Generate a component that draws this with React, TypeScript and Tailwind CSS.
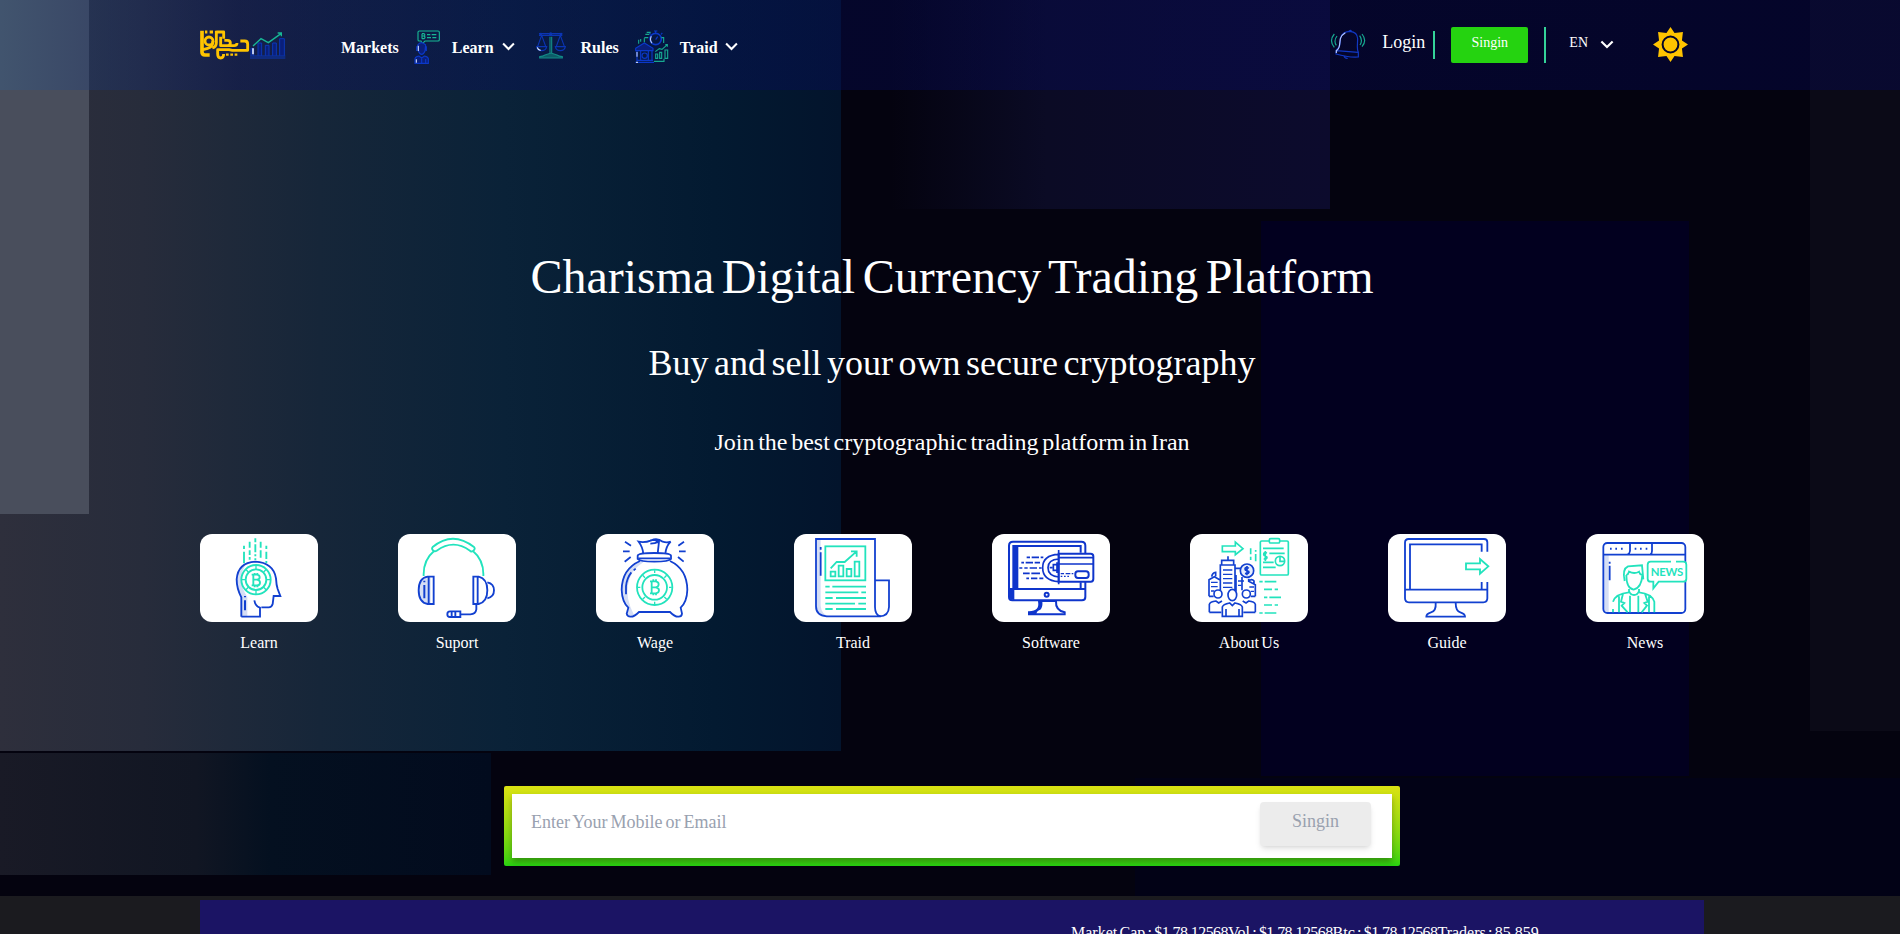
import type { ReactNode } from "react";

const BLUE = "#1240d0";
const MINT = "#22e3bd";
const PALE = "#d5def5";

function Backdrop() {
  return (
    <svg className="absolute inset-0 h-full w-full" viewBox="0 0 1900 896" preserveAspectRatio="none" aria-hidden="true">
      <defs>
        <linearGradient id="teal">
          <stop offset="0" stopColor="#2e2f3c" />
          <stop offset="0.17" stopColor="#272c3b" />
          <stop offset="0.38" stopColor="#162639" />
          <stop offset="0.6" stopColor="#0a2238" />
          <stop offset="0.85" stopColor="#031a31" />
          <stop offset="1" stopColor="#03142c" />
        </linearGradient>
        <linearGradient id="violet">
          <stop offset="0" stopColor="#04030f" />
          <stop offset="0.1" stopColor="#04030f" />
          <stop offset="0.42" stopColor="#0b0b25" />
          <stop offset="1" stopColor="#0c0b2d" />
        </linearGradient>
        <linearGradient id="low">
          <stop offset="0" stopColor="#191a26" />
          <stop offset="0.4" stopColor="#111623" />
          <stop offset="0.55" stopColor="#041020" />
          <stop offset="1" stopColor="#020b1e" />
        </linearGradient>
      </defs>
      <rect width="1900" height="896" fill="#04030f" />
      <rect width="841" height="751" fill="url(#teal)" />
      <rect width="89" height="514" fill="#494e5c" />
      <rect x="841" width="489" height="209" fill="url(#violet)" />
      <rect x="1261" y="221" width="428" height="555" fill="#02001f" />
      <rect x="1810" width="90" height="731" fill="#0b0a17" />
      <rect y="753" width="491" height="122" fill="url(#low)" />
      <rect x="1135" y="778" width="765" height="118" fill="#020216" />
    </svg>
  );
}

function Logo() {
  return (
    <svg className="h-[32px] w-[88px]" viewBox="28 26 264 96" fill="none" aria-hidden="true">
      <g stroke="#ffc400" strokeWidth="8.5" strokeLinejoin="round">
        <path d="M37 31v64q0 9 9 9h14" strokeWidth="11" />
        <circle cx="58" cy="62" r="12" />
        <path d="M46 35h7M60 35h10M70 62q0 18-16 22l-14 4" />
        <path d="M80 31v36q0 12-12 16M80 35h22v20" />
        <path d="M93 49v27h20q9 0 9-8t-9-8h-9M113 76h20q9 0 9-8" />
        <path d="M152 62h13q9 0 9 9v19h-46l-10-2H84v13q0 12 9 12t9-12" />
      </g>
      <path d="M109 103h8M122 103h8M135 103h8" stroke="#ffc400" strokeWidth="7" />
      <g stroke="#0b38b8" strokeWidth="3">
        <path d="M181 113h106M181 107h106M184 106V84h8v22M205 106V68h11v38M227 106V75h11v31M249 106V68h11v38M270 106V55h14v51" fill="#0a1f7a" />
      </g>
      <path d="M190 84v18" stroke="#dbe6ff" strokeWidth="5" />
      <path d="M190 77l24-22 22 12 38-27M264 38h11v10" stroke="#17b795" strokeWidth="4" />
    </svg>
  );
}

function AdvisorIcon() {
  return (
    <svg className="h-[34px] w-[26px]" viewBox="43 31 78 102" fill="none" strokeWidth="3.4" aria-hidden="true">
      <path d="M59 34h56q4 0 4 4v22q0 4-4 4H76l-8 8-4-8h-5q-4 0-4-4V38q0-4 4-4z" stroke="#17b795" />
      <path d="M67 42v15M67 42h6q5 4 0 7q6 4 0 8h-6M67 49h6M82 45h10M96 45h14M82 54h12M98 54h12" stroke="#17b795" />
      <path d="M54 76q10-14 24 0l-2 18q-4 10-10 10t-10-10zM51 80v14M80 80v14M46 131v-14q0-5 12-8l8 6 8-6q12 3 12 8v14zM66 115v14M78 118v12" stroke="#0b38c8" fill="#0a1f7a" />
      <path d="M56 78v16M50 119v10" stroke="#c9d8ff" />
    </svg>
  );
}

function ScalesIcon() {
  return (
    <svg className="h-[28px] w-[30px]" viewBox="407 33 90 84" fill="none" strokeWidth="3.4" aria-hidden="true">
      <path d="M416 41h70M416 46h70M424 46l-12 33M424 46l12 33M480 46l-12 33M480 46l12 33M409 80h30q-2 12-15 12t-15-12zM465 80h30q-2 12-15 12t-15-12z" stroke="#0b35b4" />
      <circle cx="421" cy="42" r="4" fill="#0b35b4" />
      <circle cx="451" cy="42" r="5" fill="#0b35b4" />
      <circle cx="482" cy="42" r="4" fill="#0b35b4" />
      <path d="M411 82q2 8 10 9" stroke="#dbe6ff" />
      <path d="M449 50v49M454 50v49" stroke="#128a86" />
      <path d="M418 114h68v-4q-10-1-16-5l-18-6-18 6q-6 4-16 5z" stroke="#128a86" fill="#0d5c68" />
    </svg>
  );
}

function TradeIcon() {
  return (
    <svg className="h-[34px] w-[36px]" viewBox="702 31 108 102" fill="none" strokeWidth="3.4" aria-hidden="true">
      <g stroke="#0b38c8">
        <path d="M707 86l26-16 26 16v7h-52zM711 94v28M722 94v28M745 94v28M756 94v28M706 128h56M709 122h50" fill="#0a1f7a" />
        <circle cx="734" cy="108" r="8" />
        <circle cx="767" cy="58" r="17" strokeWidth="5" />
        <path d="M767 34v7M762 34h10M752 44l-4-4M783 44l4-4M767 60l6-9" />
      </g>
      <path d="M708 128h6M711 97v14M754 50q-6 12 2 20" stroke="#b8caff" />
      <g stroke="#17a890">
        <path d="M740 38h12M736 44h12M733 56v12M733 54h12M716 60v12M722 58v8M784 54h7v16M762 125h30v-8" />
        <path d="M767 116v-13h6v13zM779 116V98h6v18zM795 116V91h8v25zM766 96l12-9 8 2 16-14M796 75h6v6" />
      </g>
    </svg>
  );
}

function BellIcon() {
  return (
    <svg className="h-[31px] w-[36px]" viewBox="90 88 108 93" fill="none" strokeWidth="3.6" aria-hidden="true">
      <path d="M109 151q10-7 11-20l2-18q6-17 28-18 22 2 23 22l-1 24q0 10 3 17v14q-30 2-67-9zM109 153l66 5M131 168q3 9 12 8M146 96q5-8 10 1" stroke="#1138c4" />
      <path d="M109 160v-7q9-5 10-20l2-16q4-12 15-18" stroke="#b5c6ff" />
      <path d="M103 103q-17 20 0 40M111 109q-11 14-2 28M186 103q16 20 0 38M179 108q10 15 1 28" stroke="#17a890" />
    </svg>
  );
}

function SunIcon() {
  return (
    <svg className="h-[35px] w-[35px]" viewBox="-52 -52 104 104" fill="#ffc400" aria-hidden="true">
      <path d="M0-52L12-34 37-37 34-12 52 0 34 12 37 37 12 34 0 52-12 34-37 37-34 12-52 0-34-12-37-37-12-34z" />
      <circle r="23.5" fill="none" stroke="#04052a" strokeWidth="6" />
    </svg>
  );
}

function Chevron({ className }: { className: string }) {
  return (
    <svg className={className} viewBox="0 0 12 8" fill="none" stroke="#fff" strokeWidth="1.9" aria-hidden="true">
      <path d="M1 1.3l5 5 5-5" />
    </svg>
  );
}

const learn = (
  <svg viewBox="30 27 354 264" fill="none" strokeWidth="5.6">
    <path d="M152 275v-58q-12-28-12-54 0-40 34-52-22 24-20 56 2 26 18 48v60z" fill={PALE} />
    <path d="M154 275v-58q-14-26-14-54 4-50 56-53 54 3 62 50 1 20 5 32l8 21h-20l-3 24q-3 10-12 10h-22M154 275h56v-27q-14-4-17-22" stroke={BLUE} />
    <path d="M165 213v4M165 226v30" stroke={BLUE} strokeWidth="6" />
    <g stroke={MINT}>
      <circle cx="198" cy="164" r="44" />
      <circle cx="198" cy="164" r="31" />
      <path d="M198 120v12M198 196v12M154 164h12M230 164h12M167 133l8 8M229 133l-8 8M167 195l8-8M229 195l-8-8" strokeWidth="4" />
      <path d="M185 149h16q8 1 8 8t-8 7h-11M201 164q9 1 9 9t-9 8h-16M190 149v32M194 144v5M202 144v5M194 181v6M202 181v6" />
      <path d="M162 62v10M162 80v35M179 50v18M179 76v14M179 96v8M196 40v12M196 58v24M196 88v6M196 100v5M212 50v18M212 76v22M229 62v10M229 80v22M229 108v6" />
    </g>
  </svg>
);

const support = (
  <svg viewBox="624 27 354 264" fill="none" strokeWidth="5.6">
    <path d="M716 157q-30 6-30 40t30 39h6v-79z" fill={PALE} />
    <g stroke={BLUE}>
      <path d="M713 155h18v82h-18q-27-4-27-41t27-41zM716 155v82M850 155h16q26 6 26 41t-26 41h-16zM863 155v82M892 172q20 4 20 24t-20 24M859 238v15q-2 14-18 15h-28" />
      <path d="M811 259v17h-31q-8 0-8-8.500t8-8.500z" />
      <path d="M785 259v17M796 259v17" />
      <path d="M703 167v5M703 180v40" strokeWidth="6" />
    </g>
    <path d="M701 153q-2-48 32-76M880 153q2-48-32-76M728 66q60-50 124 0 5 6-2 11t-10 0q-50-36-100 0-6 4-11-1t-1-10z" stroke={MINT} />
  </svg>
);

const wage = (
  <svg viewBox="33 27 354 264" fill="none" strokeWidth="5.4">
    <path d="M165 106q-60 32-54 88 2 40 18 54l-2 20q6 8 20 2-26-50-18-90 8-46 46-68z" fill={PALE} />
    <g stroke={BLUE}>
      <path d="M165 108q-54 24-55 86 1 36 20 54l-5 18q2 10 13 9 10 0 24-14h93q14 14 24 14 11 1 12-9l-4-18q19-18 20-54-1-62-52-86" />
      <path d="M158 92q2-8 50-8t50 8v10q-6 8-50 8t-50-8zM161 100h94M175 86q-2-20-14-36 18 4 38-4 18-8 34 4 12 4 24 0-14 14-16 36M196 56q14 0 26-6l-4 36M196 46q12-4 24 4" />
      <path d="M114 79h20M120 50l18 12M137 96l-18 14M282 79h20M297 50l-17 12M279 96l17 14M123 208v-24q2-24 16-42M146 136l6-5" />
    </g>
    <g stroke={MINT}>
      <circle cx="209" cy="187" r="53" />
      <circle cx="209" cy="187" r="37" />
      <path d="M209 136v8M209 230v8M158 187h8M252 187h8M173 151l7 7M245 151l-7 7M173 223l7-7M245 223l-7-7" strokeWidth="4" />
      <path d="M195 169h17q9 1 9 9t-9 9h-12M212 187q10 1 10 9t-10 9h-17M200 169v36M205 163v6M213 163v6M205 205v6M213 205v6" />
    </g>
  </svg>
);

const trade = (
  <svg viewBox="627 27 354 264" fill="none" strokeWidth="5.4">
    <path d="M693 42h14v200q2 26 26 32h-20q-20-6-20-30z" fill={PALE} />
    <path d="M870 42H693v202q0 28 32 30h158q28 0 29-28v-80h-42zM870 166v80q0 26 18 28" stroke={BLUE} />
    <path d="M707 66v8M707 82v70" stroke={BLUE} />
    <g stroke={MINT}>
      <rect x="721" y="64" width="120" height="102" />
      <path d="M737 154v-14h14v14zM761 154v-32h14v32zM785 154v-22h14v22zM809 154v-44h14v44zM737 130l18-19h24l35-31M798 79h17v16" />
      <path d="M721 185h13M742 185h101M721 202h99M829 202h14M721 219h22M753 219h90M721 236h89M820 236h23M721 252h22M753 252h90" />
    </g>
  </svg>
);

const software = (
  <svg viewBox="36 27 354 264" fill="none" strokeWidth="6" stroke="#0f35cb">
    <path d="M87 191V62q0-12 12-12h205q12 0 12 12v154q0 10-10 10H97q-10 0-10-10zM87 192h229M100 192V63h202v20M302 172v20" />
    <path d="M100 64h15v127h-15zM87 192h16v33q-16 0-16-12z" fill="#0f35cb" stroke="none" />
    <circle cx="200" cy="209" r="6" />
    <path d="M177 228q6 34-30 34v6h107v-6q-28-6-26-34z" />
    <path d="M177 228q6 34-30 34v6h22q0-10 12-14 8-6 6-26z" fill="#0f35cb" stroke="none" />
    <path d="M236 86h96q8 0 8 8v68q0 8-8 8h-96z" fill="#fff" />
    <path d="M236 98h104M236 117h104M236 75v103M236 88q-48 2-48 40t48 42M236 102q-32 2-32 26t32 28M236 119h-16v17h16M209 128h8M231 112v32" strokeWidth="5" />
    <rect x="286" y="139" width="40" height="20" rx="8" />
    <path d="M242 146h10M257 146h14M275 146h5M242 154h5M252 154h5M262 154h5" strokeWidth="4" />
    <path d="M140 97h10M155 97h22M182 97h8M124 113h8M137 113h22M164 113h16M118 129h9M133 129h10M149 129h22M177 129h8M129 145h20M154 145h26M139 160h8M153 160h19M178 160h12" strokeWidth="5" />
  </svg>
);

const about = (
  <svg viewBox="630 27 354 264" fill="none" strokeWidth="5">
    <g stroke={BLUE} strokeWidth="5">
      <path d="M721 212v-92h44v80M725 118v-12h36v12M744 106V94M687 214v-50l16-9 16 9M695 155q2-12 12-13v12M766 130h14M826 214v-35l-20-10v-8M768 150v50M786 156v40M806 168q10-8 16 0v8M687 214h14M812 214h14" />
      <path d="M729 135h28M729 148h28M729 161h28M729 174h28M729 187h28M693 172h20M693 185h20M693 198h10M774 168h18M774 181h10M808 186h14M812 199h10" strokeWidth="4" />
      <circle cx="801" cy="137" r="20" fill="#e8eefc" />
      <path d="M807 129q-12-4-12 3 0 4 6 5t6 5q-2 6-12 3M801 123v28" />
      <circle cx="714" cy="207" r="12" fill="#fff" />
      <circle cx="799" cy="207" r="12" fill="#fff" />
      <path d="M688 262v-24q2-8 20-10l8 6 10-6M826 262v-24q-2-8-20-10l-8 6-10-6M688 262h36M790 262h36" />
      <path d="M727 274v-28q2-8 22-12l8 8 8-8q20 4 22 12v28z" fill="#fff" />
      <ellipse cx="757" cy="210" rx="13" ry="17" fill="#fff" />
      <path d="M738 252v22M777 252v22" />
    </g>
    <g stroke={MINT}>
      <path d="M727 63h39V51l23 20-23 18V80h-39z" />
      <rect x="841" y="48" width="84" height="102" rx="4" />
      <rect x="868" y="41" width="31" height="13" rx="4" fill="#fff" />
      <path d="M861 84q-10-3-10 4 0 4 5 5t5 5q-1 6-10 3M856 78v30M849 70h62M868 85h46M849 112h32M849 127h38" />
      <circle cx="900" cy="108" r="14" />
      <path d="M900 95v14h13" />
      <path d="M812 70v18M812 95v10M827 75v5M827 87v22M838 170h10M854 170h35M852 193h24M884 193h10M852 217h10M868 217h35M852 240h24M884 240h10M838 264h10M854 264h35" />
    </g>
  </svg>
);

const guide = (
  <svg viewBox="39 27 354 264" fill="none" strokeWidth="5.5" stroke={BLUE}>
    <path d="M337 80V52q0-10-10-10H101q-11 0-11 11v167q0 12 12 12h223q12 0 12-12v-49M320 80V58H105v136M320 171v22M90 194h247M182 234q2 24-14 28-14 4-14 13h116q0-9-14-13-14-4-14-28" />
    <path d="M273 115h42v-13l25 22-25 22v-13h-42z" stroke={MINT} />
  </svg>
);

const news = (
  <svg viewBox="633 27 354 264" fill="none" strokeWidth="5.4">
    <path d="M686 90h15v172h-8q-7-2-7-12z" fill={PALE} />
    <g stroke={BLUE}>
      <rect x="685" y="54" width="246" height="210" rx="12" />
      <path d="M685 89h246M758 88q6-2 7-10V56M826 88q5-2 5-10V56M704 122v44M704 110v6" />
      <path d="M705 71h5M721 71h5M738 71h5M779 71h5M795 71h5M812 71h5" strokeWidth="6" />
    </g>
    <g stroke={MINT}>
      <path d="M749 168q-8-36 10-44l42-3 4 42M754 150q0 40 22 44 24-6 26-44-8-2-10-10-14 8-30 0-2 8-8 10M762 192v10q-40 4-48 28M714 252v10M792 192v10q38 4 46 28v32M762 198q4 12 15 12t15-12M732 214v48M822 214v48M744 206l-6 24 10 4-8 8 18 20M810 206l8 24-10 4 8 8-16 20M765 212v50M790 212v50" />
      <path d="M888 110h-61q-9 0-9 9v42q0 9 9 9h8v20l16-20h74q9 0 9-9v-42q0-9-9-9h-22" fill="#fff" />
      <text x="827" y="152" fill={MINT} stroke="none" className="font-[Lato,sans-serif] text-[34px] font-bold" textLength="98">NEWS</text>
    </g>
  </svg>
);

const features: { label: string; art: ReactNode }[] = [
  { label: "Learn", art: learn },
  { label: "Suport", art: support },
  { label: "Wage", art: wage },
  { label: "Traid", art: trade },
  { label: "Software", art: software },
  { label: "About Us", art: about },
  { label: "Guide", art: guide },
  { label: "News", art: news },
];

function Header() {
  return (
    <header className="relative flex h-[90px] items-start justify-between bg-[linear-gradient(90deg,rgba(56,92,132,0.45)_0px,rgba(30,60,120,0.36)_90px,rgba(8,14,96,0.35)_240px,rgba(4,8,92,0.35)_100%)] pl-[199px] pr-[212px] text-white">
      <div className="flex items-start">
        <div className="pt-[29px]"><Logo /></div>
        <nav className="ml-[54px] flex items-start text-base font-bold">
          <a className="pt-9">Markets</a>
          <div className="ml-[15px] flex">
            <div className="pt-[30px]"><AdvisorIcon /></div>
            <a className="ml-3 pt-9">Learn</a>
            <Chevron className="ml-2 mt-[42px] h-[9px] w-[13px]" />
          </div>
          <div className="ml-[21px] flex">
            <div className="pt-[31px]"><ScalesIcon /></div>
            <a className="ml-[15px] pt-9">Rules</a>
          </div>
          <div className="ml-[15px] flex">
            <div className="pt-[30px]"><TradeIcon /></div>
            <a className="ml-[10px] pt-9">Traid</a>
            <Chevron className="ml-[7px] mt-[42px] h-[9px] w-[13px]" />
          </div>
        </nav>
      </div>
      <div className="flex items-start">
        <div className="pt-[29px]"><BellIcon /></div>
        <a className="ml-4 pt-7 text-lg">Login</a>
        <div className="ml-2 mt-[31px] h-7 w-0.5 bg-[#34d399]" />
        <button className="ml-4 mt-[27px] h-9 w-[77px] rounded-xs bg-[#25d310] pb-1 text-sm">Singin</button>
        <div className="ml-4 mt-[27px] h-9 w-0.5 bg-[#34d399]" />
        <span className="ml-[23px] pt-[33px] text-sm">EN</span>
        <Chevron className="ml-3 mt-[40px] h-[9px] w-[14px]" />
        <div className="ml-[39px] pt-[27px]"><SunIcon /></div>
      </div>
    </header>
  );
}

function SignupBar() {
  return (
    <div className="mx-auto h-20 w-[896px] rounded-xs bg-linear-to-b from-[#dbe213] to-[#25d310] p-2">
      <div className="flex h-16 items-start justify-between bg-white pl-[19px] pr-[21px] shadow-[0_4px_6px_rgba(0,0,0,0.3)]">
        <input
          className="h-14 w-[500px] bg-transparent text-lg text-gray-600 outline-none [word-spacing:-1.5px] placeholder:text-gray-400"
          placeholder="Enter Your Mobile or Email"
        />
        <button className="mt-2 h-11 w-[111px] rounded bg-[#ececec] pb-1.5 text-lg text-gray-400 shadow-md">Singin</button>
      </div>
    </div>
  );
}

const stats = [
  { name: "Market Cap", value: "$1.78.12568" },
  { name: "Vol", value: "$1.78.12568" },
  { name: "Btc", value: "$1.78.12568" },
];

export default function App() {
  return (
    <div className="h-[934px] overflow-hidden bg-[#1b1b1f] font-['Liberation_Serif','Times_New_Roman',serif] text-white">
      <section className="relative h-[896px]">
        <Backdrop />
        <Header />
        <main className="relative ml-[200px] w-[1504px]">
          <div className="flex flex-col items-center text-center whitespace-nowrap">
            <h1 className="mt-[159px] text-5xl leading-[56px] [word-spacing:-4.500px]">Charisma Digital Currency Trading Platform</h1>
            <h2 className="mt-[38px] text-4xl leading-10 [word-spacing:-3.500px]">Buy and sell your own secure cryptography</h2>
            <h3 className="mt-[43px] text-2xl leading-8 [word-spacing:-2.300px]">Join the best cryptographic trading platform in Iran</h3>
          </div>
          <div className="mt-[76px] flex justify-between">
            {features.map((f) => (
              <a key={f.label} className="flex w-[118px] flex-col items-center">
                <div className="h-[88px] w-[118px] overflow-hidden rounded-xl bg-white">{f.art}</div>
                <span className="mt-[9px] text-base [word-spacing:-1.5px]">{f.label}</span>
              </a>
            ))}
          </div>
          <div className="mt-[131px]"><SignupBar /></div>
        </main>
      </section>
      <section className="ml-[200px] mt-1 h-[120px] w-[1504px] bg-[#1b1464] pt-[21px] pl-[871px] text-base whitespace-nowrap [word-spacing:-1.7px]">
        {stats.map((s) => (
          <span key={s.name}>
            {s.name} : <span className="-tracking-[0.58px]">{s.value}</span>
          </span>
        ))}
        <span>Traders : 85,859</span>
      </section>
    </div>
  );
}
